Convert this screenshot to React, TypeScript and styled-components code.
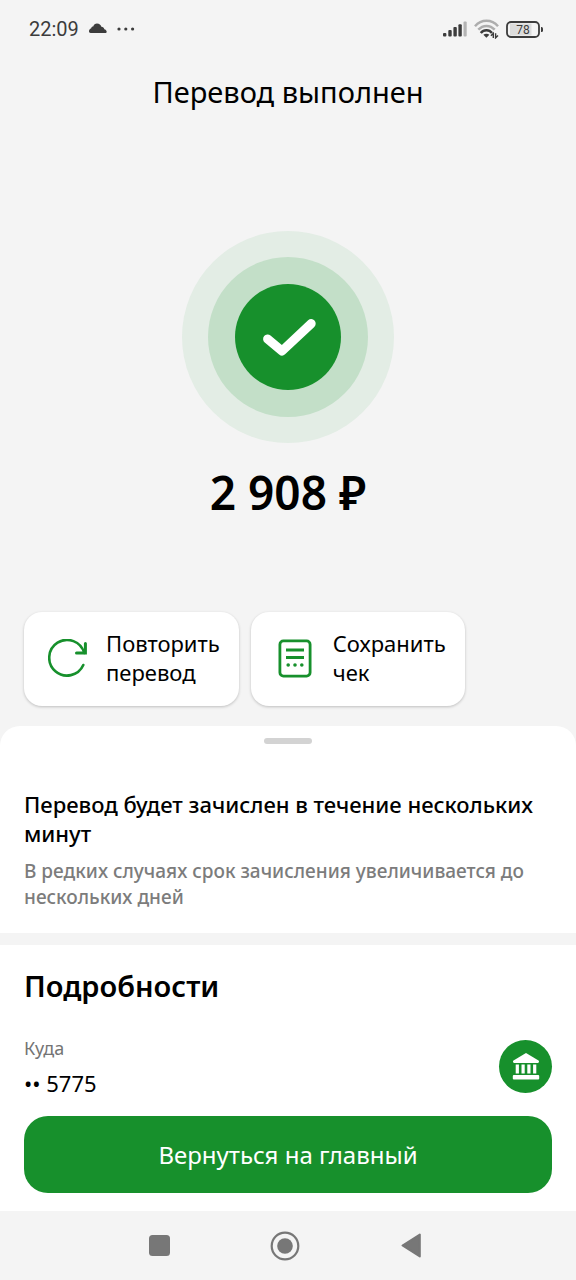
import React from "react";
import styled, { createGlobalStyle } from "styled-components";

const GREEN = "#17902c";
const PAGE = "#f4f4f4";
const GREY = "#747474";

const GlobalStyle = createGlobalStyle`
  *, *::before, *::after { box-sizing: border-box; }
  body {
    margin: 0;
    background: ${PAGE};
    color: #000;
    font-family: "Noto Sans", "Open Sans", sans-serif;
  }
  h1, h2, p, dl, dt, dd { margin: 0; font-weight: 400; }
  button { font: inherit; color: inherit; border: 0; cursor: pointer; }
  svg { display: block; flex: none; }
`;

const Screen = styled.div`
  min-height: 100vh;
  display: flex;
  flex-direction: column;
`;

const StatusBar = styled.header`
  height: 58px;
  padding: 0 32px 0 29px;
  display: flex;
  align-items: center;
  justify-content: space-between;
  color: #3c3c3c;
`;

const StatusGroup = styled.div<{ $gap: number }>`
  display: flex;
  align-items: center;
  gap: ${(p) => p.$gap}px;
`;

const Clock = styled.time`
  font-family: Roboto, sans-serif;
  font-size: 20px;
  line-height: 24px;
`;

const Summary = styled.main`
  display: flex;
  flex-direction: column;
  align-items: center;
`;

const Title = styled.h1`
  margin-top: 15px;
  font-size: 29px;
  line-height: 38px;
  text-align: center;
`;

const Halo = styled.div`
  width: 212px;
  height: 212px;
  margin-top: 120px;
  display: grid;
  place-items: center;
  border-radius: 50%;
  background: #e3ede5;
`;

const HaloInner = styled.div`
  width: 160px;
  height: 160px;
  display: grid;
  place-items: center;
  border-radius: 50%;
  background: #c3dfc8;
`;

const Disc = styled.div<{ $size: number }>`
  width: ${(p) => p.$size}px;
  height: ${(p) => p.$size}px;
  flex: none;
  display: grid;
  place-items: center;
  border-radius: 50%;
  background: ${GREEN};
`;

const Amount = styled.p`
  margin-top: 19px;
  font-size: 46px;
  line-height: 60px;
  font-weight: 600;
`;

const Actions = styled.div`
  align-self: stretch;
  margin-top: 90px;
  padding: 0 24px;
  display: flex;
  gap: 12px;
`;

const ActionCard = styled.button`
  height: 94px;
  padding: 0 19px 0 24px;
  display: flex;
  align-items: center;
  gap: 18px;
  border-radius: 18px;
  background: #fff;
  box-shadow: 0 1px 3px rgba(0, 0, 0, 0.22);
  text-align: left;
`;

const ActionLabel = styled.span`
  width: min-content;
  padding-bottom: 2px;
  font-size: 22px;
  line-height: 29px;
`;

const Sheet = styled.section`
  flex: 1;
  margin-top: 20px;
  display: flex;
  flex-direction: column;
  border-radius: 20px 20px 0 0;
  background: #fff;
`;

const Grabber = styled.div`
  width: 48px;
  height: 6px;
  margin: 12px auto 0;
  border-radius: 3px;
  background: #d3d3d3;
`;

const Notice = styled.div`
  padding: 46px 24px 23px;
`;

const NoticeTitle = styled.h2`
  font-size: 22px;
  line-height: 29px;
  font-weight: 500;
`;

const NoticeText = styled.p`
  margin-top: 10px;
  font-size: 19px;
  line-height: 26px;
  font-weight: 500;
  color: #7c7c7c;
`;

const Divider = styled.hr`
  width: 100%;
  height: 12px;
  margin: 0;
  border: 0;
  background: ${PAGE};
`;

const Details = styled.div`
  padding: 22px 24px 0;
`;

const DetailsTitle = styled.h2`
  font-size: 29px;
  line-height: 38px;
  font-weight: 600;
`;

const DetailRow = styled.div`
  margin-top: 30px;
  display: flex;
  align-items: center;
  justify-content: space-between;
`;

const Term = styled.dt`
  font-size: 18px;
  line-height: 26px;
  color: ${GREY};
`;

const Value = styled.dd`
  margin-top: 8px;
  font-size: 22px;
  line-height: 29px;
`;

const Footer = styled.div`
  margin-top: auto;
  padding: 16px 24px 18px;
`;

const PrimaryButton = styled.button`
  width: 100%;
  height: 77px;
  border-radius: 24px;
  background: ${GREEN};
  color: #fff;
  font-size: 24px;
  line-height: 32px;
`;

const NavBar = styled.nav`
  height: 69px;
  padding: 0 103px 0 97px;
  display: flex;
  align-items: center;
  justify-content: space-between;
`;

const NavButton = styled.button`
  width: 125px;
  height: 48px;
  padding: 0;
  display: grid;
  place-items: center;
  background: none;
  color: #777;
`;

const CloudIcon = () => (
  <svg width="18" height="12" viewBox="0 0 18 12" fill="currentColor" aria-hidden="true">
    <path d="M1.600 10C.6 10 0 9.300 0 8.300 0 7 .8 5.800 2.200 5.300 2.300 4.300 3.200 3.600 4.200 3.600 4.800 1.600 6.200.4 8 .4c2.300 0 3.900 1.300 4.400 3.400 1.600 0 2.700 1 2.900 2.400C16.700 6.500 17.700 7.500 17.700 8.700 17.700 9.500 17.100 10 16.300 10z" />
  </svg>
);

const DotsIcon = () => (
  <svg width="18" height="4" viewBox="0 0 18 4" fill="currentColor" aria-hidden="true">
    <circle cx="2" cy="2" r="1.600" />
    <circle cx="8.800" cy="2" r="1.600" />
    <circle cx="15.600" cy="2" r="1.600" />
  </svg>
);

const SignalIcon = () => (
  <svg width="24" height="16" viewBox="0 0 24 16" fill="currentColor" aria-hidden="true">
    <rect x="0" y="12" width="3.400" height="3.500" rx="1" />
    <rect x="5.300" y="9" width="3.400" height="6.500" rx="1" />
    <rect x="10.400" y="6" width="3.400" height="9.500" rx="1" />
    <rect x="15.400" y="3.200" width="3.400" height="12.300" rx="1" />
    <rect x="20.500" y="0.500" width="3.200" height="15" rx="1" fill="#b4b4b4" />
  </svg>
);

const WifiIcon = () => (
  <svg width="25" height="20" viewBox="0 0 25 20" fill="none" strokeWidth="2.500" aria-hidden="true">
    <path d="M1 7.200C7.300 0 17.700 0 24 7.200" stroke="#adadad" />
    <path d="M4.300 10.700c4.600-5.100 11.800-5.100 16.400 0" stroke="#adadad" />
    <path d="M6.800 14c3-3.800 8.400-3.800 11.200 0" stroke="currentColor" />
    <path d="M9.400 15.800c1.700-1.500 4.300-1.500 6 0L12.400 18.800z" fill="currentColor" />
    <path d="M19.300 19v-4.600l-2.400 2.400M21.600 14.200v4.600l2.400-2.400" stroke="currentColor" strokeWidth="1.400" />
  </svg>
);

const BatteryIcon = () => (
  <svg width="38" height="17" viewBox="0 0 38 17" role="img">
    <title>Заряд</title>
    <rect x="1" y="1" width="32" height="15" rx="4" fill="#f4f4f4" />
    <path d="M4 2.500h21.500v12H4z" fill="#dcdcdc" />
    <rect x="1" y="1" width="32" height="15" rx="4" fill="none" stroke="currentColor" strokeWidth="1.800" />
    <path d="M35 6h.5a1.500 1.500 0 0 1 1.500 1.500v2a1.500 1.500 0 0 1-1.500 1.500H35z" fill="currentColor" />
    <text x="17" y="13" textAnchor="middle" fontFamily="Roboto, sans-serif" fontSize="12" fill="currentColor">
      78
    </text>
  </svg>
);

const CheckIcon = () => (
  <svg width="60" height="44" viewBox="0 0 60 44" fill="none" aria-hidden="true">
    <path d="M9.600 24 24 36 53.200 8.600" stroke="#fff" strokeWidth="9" strokeLinecap="round" strokeLinejoin="round" />
  </svg>
);

const RepeatIcon = () => (
  <svg width="40" height="40" viewBox="0 0 40 40" fill="none" stroke={GREEN} strokeWidth="2.600" aria-hidden="true">
    <path d="M35.300 26A17.800 17.800 0 1 1 36.200 14" strokeLinecap="round" />
    <path d="M37.400 4.500V14H28.500" strokeWidth="3" strokeLinecap="round" strokeLinejoin="miter" />
  </svg>
);

const ReceiptIcon = () => (
  <svg width="40" height="40" viewBox="0 0 40 40" fill="none" stroke={GREEN} strokeWidth="2.800" aria-hidden="true">
    <rect x="4.900" y="1.900" width="30.200" height="35.200" rx="3.500" />
    <path d="M11 11h18M11 18.500h18" />
    <g fill={GREEN} stroke="none">
      <circle cx="13.200" cy="26" r="1.800" />
      <circle cx="20" cy="26" r="1.800" />
      <circle cx="26.800" cy="26" r="1.800" />
    </g>
  </svg>
);

const BankIcon = () => (
  <svg width="28" height="28" viewBox="0 0 28 28" fill="#fff" aria-hidden="true">
    <path d="M14 0 26.500 7.600c.8.500.6 2.400-.5 2.400H2C.9 10 .7 8.100 1.500 7.600z" />
    <path d="M3.700 11.500h3.200v9H3.700zM9.500 11.500h3.200v9H9.500zM15.300 11.500h3.200v9h-3.200zM21.100 11.500h3.200v9h-3.200z" />
    <rect x="0.800" y="22" width="26.400" height="4.400" rx="1" />
  </svg>
);

const RecentsIcon = () => (
  <svg width="21" height="21" viewBox="0 0 21 21" fill="currentColor" aria-hidden="true">
    <rect width="21" height="21" rx="3.500" />
  </svg>
);

const HomeIcon = () => (
  <svg width="30" height="30" viewBox="0 0 30 30" fill="none" aria-hidden="true">
    <circle cx="15" cy="15" r="13.300" stroke="currentColor" strokeWidth="2.200" />
    <circle cx="15" cy="15" r="7.800" fill="currentColor" />
  </svg>
);

const BackIcon = () => (
  <svg width="20" height="25" viewBox="0 0 20 25" aria-hidden="true">
    <path d="M18.800 1.600v21.800L1.500 12.500z" fill="currentColor" stroke="currentColor" strokeWidth="2" strokeLinejoin="round" />
  </svg>
);

export default function App() {
  return (
    <>
      <GlobalStyle />
      <Screen>
        <StatusBar>
          <StatusGroup $gap={10}>
            <Clock>22:09</Clock>
            <CloudIcon />
            <DotsIcon />
          </StatusGroup>
          <StatusGroup $gap={7}>
            <SignalIcon />
            <WifiIcon />
            <BatteryIcon />
          </StatusGroup>
        </StatusBar>

        <Summary>
          <Title>Перевод выполнен</Title>
          <Halo>
            <HaloInner>
              <Disc $size={106}>
                <CheckIcon />
              </Disc>
            </HaloInner>
          </Halo>
          <Amount>2 908 ₽</Amount>
          <Actions>
            <ActionCard type="button">
              <RepeatIcon />
              <ActionLabel>Повторить перевод</ActionLabel>
            </ActionCard>
            <ActionCard type="button">
              <ReceiptIcon />
              <ActionLabel>Сохранить чек</ActionLabel>
            </ActionCard>
          </Actions>
        </Summary>

        <Sheet>
          <Grabber />
          <Notice>
            <NoticeTitle>Перевод будет зачислен в течение нескольких минут</NoticeTitle>
            <NoticeText>В редких случаях срок зачисления увеличивается до нескольких дней</NoticeText>
          </Notice>
          <Divider />
          <Details>
            <DetailsTitle>Подробности</DetailsTitle>
            <DetailRow>
              <dl>
                <Term>Куда</Term>
                <Value>•• 5775</Value>
              </dl>
              <Disc $size={53}>
                <BankIcon />
              </Disc>
            </DetailRow>
          </Details>
          <Footer>
            <PrimaryButton type="button">Вернуться на главный</PrimaryButton>
          </Footer>
        </Sheet>

        <NavBar>
          <NavButton type="button" aria-label="Недавние">
            <RecentsIcon />
          </NavButton>
          <NavButton type="button" aria-label="Домой">
            <HomeIcon />
          </NavButton>
          <NavButton type="button" aria-label="Назад">
            <BackIcon />
          </NavButton>
        </NavBar>
      </Screen>
    </>
  );
}
